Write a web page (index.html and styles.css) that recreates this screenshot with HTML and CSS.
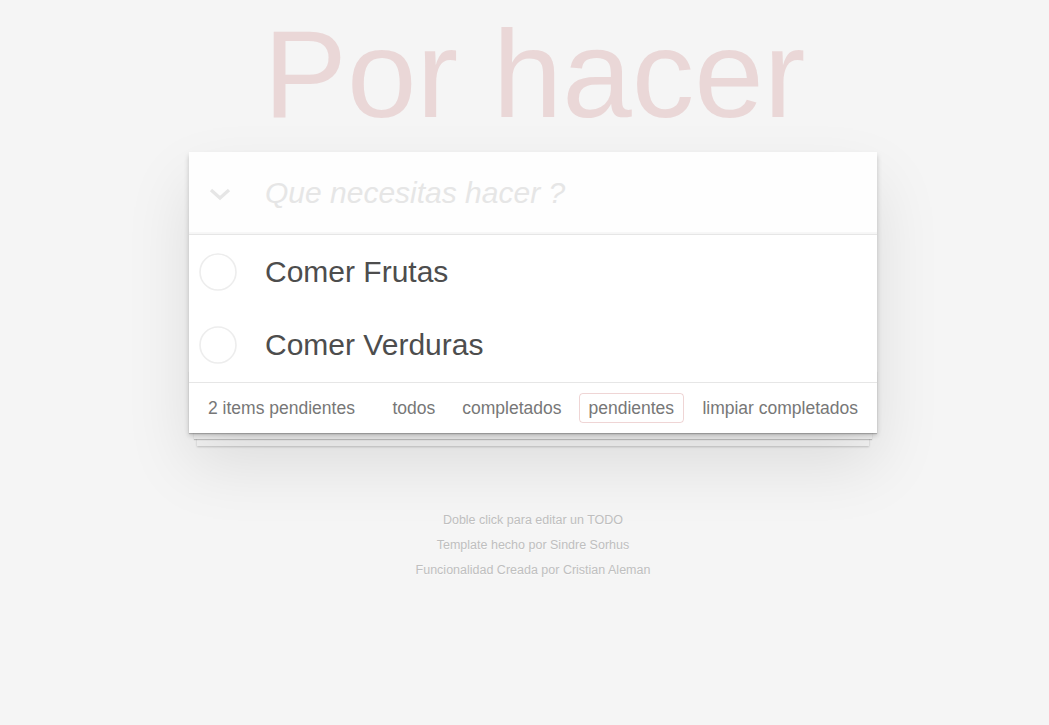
FILE: index.html
```html
<!DOCTYPE html>
<html lang="es">
<head>
<meta charset="utf-8">
<title>Por hacer</title>
<link rel="stylesheet" href="styles.css">
</head>
<body>
<div class="page">
  <h1 class="title">Por hacer</h1>
  <section class="todoapp">
    <div class="new-row">
      <span class="toggle-all">
        <svg width="22" height="14" viewBox="0 0 22 14"><path d="M2 3 L11 11 L20 3" fill="none" stroke="#e6e6e6" stroke-width="3.2" stroke-linecap="butt" stroke-linejoin="miter"/></svg>
      </span>
      <input class="new-todo" type="text" placeholder="Que necesitas hacer ?">
    </div>
    <ul class="todo-list">
      <li class="todo">
        <span class="toggle"><svg width="38" height="38" viewBox="0 0 38 38"><circle cx="19" cy="19" r="18" fill="none" stroke="#ededed" stroke-width="1.6"/></svg></span>
        <span class="label">Comer Frutas</span>
      </li>
      <li class="todo">
        <span class="toggle"><svg width="38" height="38" viewBox="0 0 38 38"><circle cx="19" cy="19" r="18" fill="none" stroke="#ededed" stroke-width="1.6"/></svg></span>
        <span class="label">Comer Verduras</span>
      </li>
    </ul>
    <footer class="footer">
      <span class="count">2 items pendientes</span>
      <ul class="filters">
        <li><a class="filter">todos</a></li>
        <li><a class="filter">completados</a></li>
        <li><a class="filter selected">pendientes</a></li>
      </ul>
      <span class="clear">limpiar completados</span>
    </footer>
  </section>
  <footer class="info">
    <p>Doble click para editar un TODO</p>
    <p>Template hecho por Sindre Sorhus</p>
    <p>Funcionalidad Creada por Cristian Aleman</p>
  </footer>
</div>
</body>
</html>
```

FILE: styles.css
```css
html, body {
  margin: 0;
  padding: 0;
}
body {
  background: #f5f5f5;
  color: #4d4d4d;
  font-family: "Liberation Sans", Arial, Helvetica, sans-serif;
  font-size: 17.5px;
  -webkit-font-smoothing: antialiased;
}
.page {
  width: 688px;
  margin-left: calc(50% - 335.5px);
}
.title {
  margin: 0;
  height: 152px;
  line-height: 148px;
  font-size: 125px;
  font-weight: 100;
  text-align: center;
  color: rgba(175, 47, 47, 0.15);
  padding-left: 3px;
}
.todoapp {
  background: #fff;
  position: relative;
  margin: 0 0 50px 0;
  box-shadow: 0 2.5px 5px 0 rgba(0, 0, 0, 0.2), 0 31px 62px 0 rgba(0, 0, 0, 0.1);
}
.new-row {
  display: flex;
  align-items: center;
  height: 82px;
  border-bottom: 1px solid #e6e6e6;
  background: rgba(0, 0, 0, 0.003);
  box-shadow: inset 0 -2px 1px rgba(0, 0, 0, 0.03);
}
.toggle-all {
  width: 62px;
  display: flex;
  justify-content: center;
  align-items: center;
  padding-top: 1px;
}
.new-todo {
  flex: 1;
  border: none;
  outline: none;
  background: transparent;
  margin: 0;
  padding: 0 20px 0 14px;
  height: 81px;
  font-family: inherit;
  font-size: 30px;
  color: #4d4d4d;
}
.new-todo::placeholder {
  font-style: italic;
  font-weight: 300;
  color: #e6e6e6;
}
.todo-list {
  list-style: none;
  margin: 0;
  padding: 0;
}
.todo {
  display: flex;
  align-items: center;
  height: 73.5px;
}
.toggle {
  width: 38px;
  height: 38px;
  margin-left: 10px;
  margin-right: 28px;
  display: flex;
}
.label {
  font-size: 30px;
  color: #4d4d4d;
  line-height: 1.2;
}
.footer {
  position: relative;
  display: flex;
  align-items: center;
  height: 50px;
  padding: 0 19px;
  border-top: 1px solid #e6e6e6;
  color: #777;
  font-size: 17.5px;
}
.footer::before {
  content: "";
  position: absolute;
  right: 0;
  bottom: 0;
  left: 0;
  height: 62px;
  overflow: hidden;
  z-index: -1;
  box-shadow: 0 1px 1px rgba(0, 0, 0, 0.2),
              0 11px 0 -5px #f6f6f6,
              0 12px 1px -5px rgba(0, 0, 0, 0.2),
              0 21px 0 -8px #f6f6f6,
              0 22px 2px -8px rgba(0, 0, 0, 0.2);
}
.count {
  white-space: nowrap;
}
.filters {
  list-style: none;
  display: flex;
  margin: 0 0 0 24px;
  padding: 0;
}
.filter {
  display: block;
  margin: 0 3.75px;
  padding: 4px 8.75px;
  border: 1px solid transparent;
  border-radius: 3.75px;
  color: inherit;
  line-height: 20px;
}
.filter.selected {
  border-color: rgba(175, 47, 47, 0.2);
}
.clear {
  margin-left: auto;
  white-space: nowrap;
}
.info {
  margin: 81px auto 0;
  color: #bfbfbf;
  font-size: 12.5px;
  text-align: center;
  text-shadow: 0 1px 0 rgba(255, 255, 255, 0.5);
}
.info p {
  line-height: 1;
  margin: 12.5px 0;
}
```
